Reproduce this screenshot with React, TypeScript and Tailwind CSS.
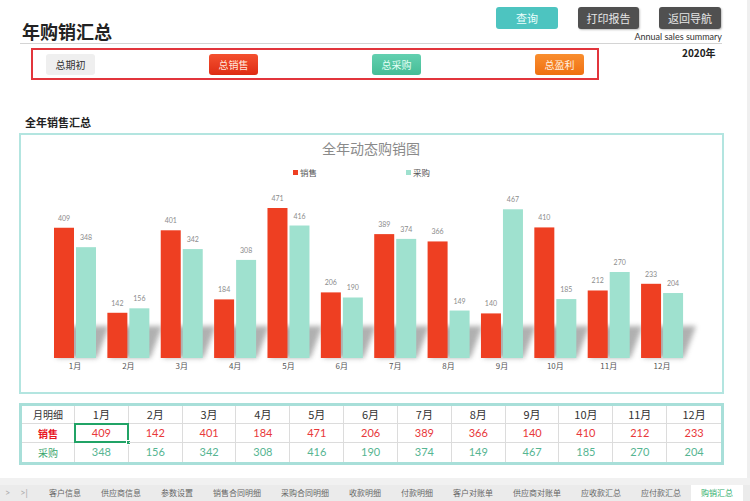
import React from "react";

const months = ["1月", "2月", "3月", "4月", "5月", "6月", "7月", "8月", "9月", "10月", "11月", "12月"];
const sales = [409, 142, 401, 184, 471, 206, 389, 366, 140, 410, 212, 233];
const purchase = [348, 156, 342, 308, 416, 190, 374, 149, 467, 185, 270, 204];

const tabs = ["客户信息", "供应商信息", "参数设置", "销售合同明细", "采购合同明细", "收款明细", "付款明细", "客户对账单", "供应商对账单", "应收款汇总", "应付款汇总", "购销汇总"];

const FONT = { fontFamily: '"Noto Sans CJK SC", sans-serif' };
const NUM = { fontFamily: 'Lato, "Noto Sans CJK SC", sans-serif' };

const BASE = 358;
const SCALE = 150 / 471;

function Chart() {
  return (
    <svg width={701} height={257} viewBox="21 135 701 257" style={FONT}>
      <defs>
        <filter id="blur" x="-50%" y="-50%" width="200%" height="200%">
          <feGaussianBlur stdDeviation="2.5" />
        </filter>
      </defs>
      <text x={371} y={154} textAnchor="middle" fontSize={14} fill="#8a8a8a">
        全年动态购销图
      </text>
      <rect x={293} y={170} width={5} height={5} fill="#ee3f22" />
      <text x={300} y={176} fontSize={8.5} fill="#555">销售</text>
      <rect x={406} y={170} width={5} height={5} fill="#9fe1cf" />
      <text x={413} y={176} fontSize={8.5} fill="#555">采购</text>

      {months.map((m, i) => {
        const c = 75 + i * 53.37;
        return (
          <polygon
            key={"s" + m}
            points={`${c - 19},${BASE} ${c + 22},${BASE} ${c + 34},${BASE - 32} ${c - 6},${BASE - 32}`}
            fill="#8f8f8f"
            opacity={0.7}
            filter="url(#blur)"
          />
        );
      })}

      {months.map((m, i) => {
        const c = 75 + i * 53.37;
        const hs = sales[i] * SCALE;
        const hp = purchase[i] * SCALE;
        return (
          <g key={m}>
            <rect x={c - 21} y={BASE - hs} width={20} height={hs} fill="#ee3f22" />
            <rect x={c + 1} y={BASE - hp} width={20} height={hp} fill="#9fe1cf" />
            <text x={c - 11} y={BASE - hs - 7} textAnchor="middle" fontSize={7} fill="#8c8c8c" style={NUM}>
              {sales[i]}
            </text>
            <text x={c + 11} y={BASE - hp - 7} textAnchor="middle" fontSize={7} fill="#8c8c8c" style={NUM}>
              {purchase[i]}
            </text>
            <text x={c} y={369} textAnchor="middle" fontSize={8} fill="#555">
              {m}
            </text>
          </g>
        );
      })}
    </svg>
  );
}

export default function App() {
  return (
    <div className="w-[750px] h-[501px] overflow-hidden bg-white flex flex-col" style={FONT}>
      <div className="flex h-[478px]">
        <div className="w-[747px] flex flex-col">
          {/* Header */}
          <div className="ml-[20px] w-[702px] h-[44px] border-b border-[#d4d4d4] flex justify-between items-end">
            <div className="ml-[2px] text-[18px] leading-[22px] font-bold text-[#222] mb-[1px]">年购销汇总</div>
            <div className="flex flex-col items-end">
              <div className="flex gap-[20px] mr-[1px]">
                <div className="w-[62px] h-[22px] rounded-[3px] bg-[#4dc4c0] text-[#eafffd] text-[11px] flex items-center justify-center">查询</div>
                <div className="w-[61px] h-[22px] rounded-[3px] bg-[#505050] text-[#e6e6e6] text-[11px] flex items-center justify-center shadow-[1px_1px_2px_rgba(0,0,0,0.25)]">打印报告</div>
                <div className="w-[62px] h-[22px] rounded-[3px] bg-[#505050] text-[#e6e6e6] text-[11px] flex items-center justify-center shadow-[1px_1px_2px_rgba(0,0,0,0.25)]">返回导航</div>
              </div>
              <div className="mt-[2px] text-[9px] leading-[12px] text-[#333]" style={NUM}>Annual sales summary</div>
            </div>
          </div>

          {/* Summary buttons */}
          <div className="mt-[4px] flex items-start">
            <div className="ml-[31px] w-[568px] h-[32px] border-2 border-[#e2353c] px-[13px] flex items-center justify-between">
              <div className="w-[49px] h-[21px] rounded-[3px] bg-[#efefef] text-[#333] text-[10px] flex items-center justify-center">总期初</div>
              <div className="w-[49px] h-[21px] rounded-[3px] bg-gradient-to-b from-[#f4502f] to-[#de2a12] text-[#ffe6dc] text-[10px] flex items-center justify-center">总销售</div>
              <div className="w-[49px] h-[21px] rounded-[3px] bg-gradient-to-b from-[#62d0b0] to-[#45bd96] text-[#e4fff6] text-[10px] flex items-center justify-center">总采购</div>
              <div className="w-[49px] h-[21px] rounded-[3px] bg-gradient-to-b from-[#f98e2e] to-[#ef700e] text-[#fff1e2] text-[10px] flex items-center justify-center">总盈利</div>
            </div>
            <div className="ml-[83px] -mt-[1px] text-[10px] leading-[12px] font-bold text-[#222]">2020年</div>
          </div>

          {/* Section title */}
          <div className="mt-[35px] ml-[25px] text-[11px] leading-[14px] font-bold text-[#222]">全年销售汇总</div>

          {/* Chart */}
          <div className="mt-[4px] ml-[19px] w-[705px] h-[261px] border-2 border-[#b3e5e0]">
            <Chart />
          </div>

          {/* Table */}
          <div className="mt-[9px] ml-[19px] w-[705px] border-[3px] border-[#a8dfd9] grid grid-cols-[53px_repeat(12,1fr)] text-[11px]">
            <div className="h-[18px] border-r border-b border-[#dcdcdc] flex items-center justify-center text-[10px] text-[#333]">月明细</div>
            {months.map((m, i) => (
              <div key={m} className={`h-[18px] border-b border-[#dcdcdc] flex items-center justify-center text-[#333] ${i < 11 ? "border-r" : ""}`}>
                {m}
              </div>
            ))}
            <div className="h-[19px] border-r border-b border-[#dcdcdc] flex items-center justify-center text-[10px] font-bold text-[#e8141d]">销售</div>
            {sales.map((v, i) => (
              <div key={"sv" + i} className={`relative h-[19px] border-b border-[#dcdcdc] flex items-center justify-center text-[#e8383a] ${i < 11 ? "border-r" : ""}`} style={NUM}>
                {v}
                {i === 0 && (
                  <>
                    <div className="absolute -inset-[1px] border-2 border-[#21a366]" />
                    <div className="absolute -right-[3px] -bottom-[3px] w-[5px] h-[5px] bg-[#21a366] border border-white" />
                  </>
                )}
              </div>
            ))}
            <div className="h-[19px] border-r border-[#dcdcdc] flex items-center justify-center text-[10px] text-[#3aa66e]">采购</div>
            {purchase.map((v, i) => (
              <div key={"pv" + i} className={`h-[19px] border-[#dcdcdc] flex items-center justify-center text-[#56b592] ${i < 11 ? "border-r" : ""}`} style={NUM}>
                {v}
              </div>
            ))}
          </div>
        </div>
        <div className="w-[3px] bg-[#efefef]" />
      </div>

      {/* Bottom sheet tabs */}
      <div className="h-[7px] bg-[#f1f1f1]" />
      <div className="h-[16px] bg-[#ebebeb] flex items-stretch text-[8px] text-[#666]">
        <div className="w-[39px] flex items-center text-[#aaa] text-[9px]" style={NUM}>
          <span className="ml-[5px]">&gt;</span>
          <span className="ml-[10px]">&gt;|</span>
        </div>
        {tabs.map((t, i) => (
          <div
            key={t}
            className={`px-[10px] flex items-center ${i === tabs.length - 1 ? "bg-white text-[#2fae6c]" : ""}`}
          >
            {t}
          </div>
        ))}
      </div>
    </div>
  );
}
